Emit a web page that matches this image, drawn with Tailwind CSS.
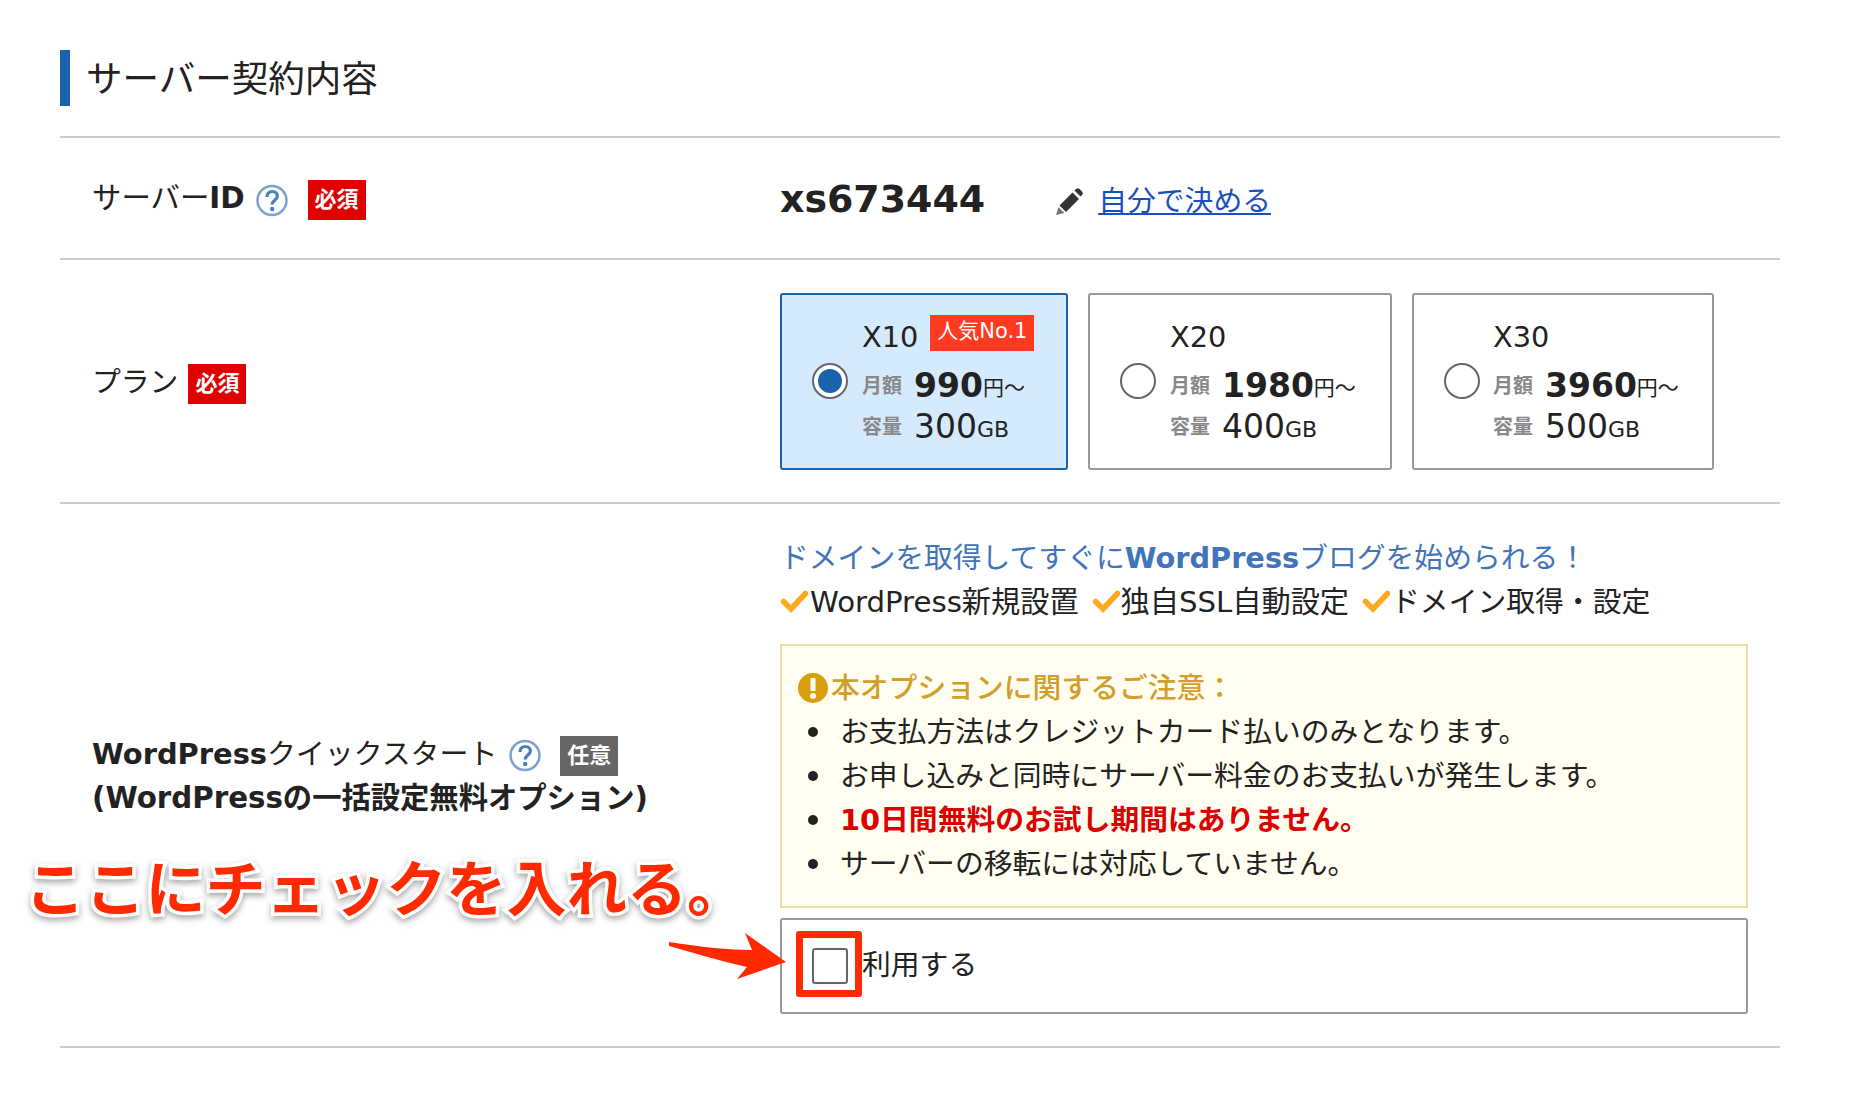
<!DOCTYPE html>
<html lang="ja">
<head>
<meta charset="utf-8">
<script src="https://cdn.jsdelivr.net/npm/@tailwindcss/browser@4"></script>
<title>サーバー契約内容</title>
</head>
<body class="bg-white text-[#222] font-['DejaVu_Sans','Noto_Sans_CJK_JP',sans-serif]">
<main class="relative w-[1854px] h-[1106px] overflow-hidden pt-[50px] pl-[60px]">
  <h2 class="h-[56px] w-[1720px] border-l-[10px] border-[#1a62ab] pl-[16px] text-[36.500px] leading-[60px] font-normal">サーバー契約内容</h2>

  <section class="mt-[30px] w-[1720px] border-t-2 border-[#ccc] grid grid-cols-[720px_1fr] h-[122px] items-center">
    <div class="pl-[32px] flex items-center text-[29.400px]">
      <span class="mt-[1px]">サーバー<b class="font-bold">ID</b></span>
      <svg class="ml-[11px] mt-[6px] w-[32px] h-[33px]" viewBox="0 0 32 33"><circle cx="16" cy="16.500" r="14.500" fill="#fff" stroke="#7ba3cc" stroke-width="2.500"/><path d="M11 13c0-3.500 2.300-5.500 5.200-5.500s5.200 1.800 5.200 4.500c0 4-5.200 4-5.200 8.500" fill="none" stroke="#4a80b8" stroke-width="3.200"/><circle cx="16.200" cy="25" r="2.200" fill="#4a80b8"/></svg>
      <span class="ml-[20px] mt-[4px] w-[58px] h-[40px] bg-[#e00000] text-white font-bold text-[22px] leading-[40px] text-center">必須</span>
    </div>
    <div class="flex items-center">
      <span class="font-bold text-[37.900px] leading-[44px] mt-[1px]">xs673444</span>
      <svg class="ml-[70px] mt-[5px] w-[28px] h-[28px]" viewBox="0 0 28 28"><path d="M3.500 20L9.500 26 1 28z" fill="#777"/><path d="M17.500 5.500L24 12 11 25 4.500 18.500z" fill="#333"/><path d="M19.500 3.500L21 2q2-1.500 3.500 0l2.500 2.500q1.500 1.500 0 3.500L25.500 9.500z" fill="#333"/></svg>
      <a class="ml-[15px] mt-[6px] text-[28.800px] leading-[36px] underline underline-offset-2 text-[#1a4fc0]">自分で決める</a>
    </div>
  </section>

  <section class="w-[1720px] border-t-2 border-[#ccc] grid grid-cols-[720px_1fr] h-[244px] items-center">
    <div class="pl-[32px] pt-[2px] flex items-center text-[28.800px]">
      <span class="mt-[1px]">プラン</span>
      <span class="ml-[10px] mt-[4px] w-[58px] h-[40px] bg-[#e00000] text-white font-bold text-[22px] leading-[40px] text-center">必須</span>
    </div>
    <div class="flex gap-[20px]">
      <div class="w-[288px] h-[177px] rounded-[3px] border-2 border-[#1a62ab] bg-[#d6eafd] flex items-center pl-[30px] gap-[14px]">
        <span class="w-[36px] h-[36px] -mt-[1px] rounded-full border-2 border-[#666] bg-white flex items-center justify-center"><span class="w-[24px] h-[24px] rounded-full bg-[#1a62ab]"></span></span>
        <div class="-mt-[1px]">
          <div class="h-[44px] flex items-center text-[28.800px]"><span>X10</span><span class="ml-[12px] w-[104px] h-[36px] -mt-[10px] bg-[#ff3a20] text-white text-[21px] leading-[32px] text-center">人気No.1</span></div>
          <div class="mt-[4px] h-[44px] flex items-center"><span class="w-[52px] text-[20px] font-bold text-[#888]">月額</span><b class="text-[33px]">990</b><span class="text-[21px] mt-[6px]">円～</span></div>
          <div class="h-[38px] flex items-center"><span class="w-[52px] text-[20px] font-bold text-[#888]">容量</span><span class="text-[33px]">300</span><span class="text-[22px] mt-[6px]">GB</span></div>
        </div>
      </div>
      <div class="w-[304px] h-[177px] rounded-[3px] border-2 border-[#999] flex items-center pl-[30px] gap-[14px]">
        <span class="w-[36px] h-[36px] -mt-[1px] rounded-full border-2 border-[#666] bg-white"></span>
        <div class="-mt-[1px]">
          <div class="h-[44px] flex items-center text-[28.800px]"><span>X20</span></div>
          <div class="mt-[4px] h-[44px] flex items-center"><span class="w-[52px] text-[20px] font-bold text-[#888]">月額</span><b class="text-[33px]">1980</b><span class="text-[21px] mt-[6px]">円～</span></div>
          <div class="h-[38px] flex items-center"><span class="w-[52px] text-[20px] font-bold text-[#888]">容量</span><span class="text-[33px]">400</span><span class="text-[22px] mt-[6px]">GB</span></div>
        </div>
      </div>
      <div class="w-[302px] h-[177px] rounded-[3px] border-2 border-[#999] flex items-center pl-[30px] gap-[13px]">
        <span class="w-[36px] h-[36px] -mt-[1px] rounded-full border-2 border-[#666] bg-white"></span>
        <div class="-mt-[1px]">
          <div class="h-[44px] flex items-center text-[28.800px]"><span>X30</span></div>
          <div class="mt-[4px] h-[44px] flex items-center"><span class="w-[52px] text-[20px] font-bold text-[#888]">月額</span><b class="text-[33px]">3960</b><span class="text-[21px] mt-[6px]">円～</span></div>
          <div class="h-[38px] flex items-center"><span class="w-[52px] text-[20px] font-bold text-[#888]">容量</span><span class="text-[33px]">500</span><span class="text-[22px] mt-[6px]">GB</span></div>
        </div>
      </div>
    </div>
  </section>

  <section class="w-[1720px] border-t-2 border-b-2 border-[#ccc] grid grid-cols-[720px_1fr] h-[546px] items-center">
    <div class="pl-[32px] pt-[2px] text-[28.900px]">
      <div class="flex items-center h-[44px]"><span class="mt-[2px]"><b>WordPress</b>クイックスタート</span>
        <svg class="ml-[12px] mt-[3px] w-[32px] h-[33px]" viewBox="0 0 32 33"><circle cx="16" cy="16.500" r="14.500" fill="#fff" stroke="#7ba3cc" stroke-width="2.500"/><path d="M11 13c0-3.500 2.300-5.500 5.200-5.500s5.200 1.800 5.200 4.500c0 4-5.200 4-5.200 8.500" fill="none" stroke="#4a80b8" stroke-width="3.200"/><circle cx="16.200" cy="25" r="2.200" fill="#4a80b8"/></svg>
        <span class="ml-[19px] mt-[3px] w-[58px] h-[40px] bg-[#666] text-white font-bold text-[22px] leading-[40px] text-center">任意</span></div>
      <div class="h-[44px] leading-[44px] font-bold text-[29.300px]">(WordPressの一括設定無料オプション)</div>
    </div>
    <div class="w-[968px] -mt-[1px]">
      <p class="text-[28.800px] leading-[44px] text-[#4174b8]">ドメインを取得してすぐに<b>WordPress</b>ブログを始められる！</p>
      <ul class="flex text-[29.200px] leading-[44px] gap-[13px]">
        <li class="flex items-center"><svg class="w-[28px] h-[28px] mr-[2px] shrink-0" viewBox="0 0 28 28"><path d="M3.500 13.500l7.500 7.500L25.500 5.500" fill="none" stroke="#ffa91e" stroke-width="5.500" stroke-linecap="round"/></svg>WordPress新規設置</li>
        <li class="flex items-center"><svg class="w-[28px] h-[28px] mr-[1px] shrink-0" viewBox="0 0 28 28"><path d="M3.500 13.500l7.500 7.500L25.500 5.500" fill="none" stroke="#ffa91e" stroke-width="5.500" stroke-linecap="round"/></svg>独自SSL自動設定</li>
        <li class="flex items-center text-[28.800px]"><svg class="w-[28px] h-[28px] mr-[1px] shrink-0" viewBox="0 0 28 28"><path d="M3.500 13.500l7.500 7.500L25.500 5.500" fill="none" stroke="#ffa91e" stroke-width="5.500" stroke-linecap="round"/></svg>ドメイン取得・設定</li>
      </ul>
      <div class="mt-[20px] h-[264px] border-2 border-[#e8e0a0] bg-[#fffef0] pl-[16px] pt-[20px]">
        <p class="flex items-center text-[28.800px] leading-[44px] font-medium text-[#d39e2c]"><svg class="w-[30px] h-[30px] mr-[3px]" viewBox="0 0 30 30"><circle cx="15" cy="15" r="15" fill="#d99e0b"/><path d="M15 5v13" stroke="#fffef0" stroke-width="5"/><circle cx="15" cy="23" r="3" fill="#fffef0"/></svg>本オプションに関するご注意：</p>
        <ul class="text-[28.800px] leading-[44px]">
          <li class="flex items-center"><span class="w-[10px] h-[10px] rounded-full bg-[#222] ml-[10px] mr-[22px]"></span>お支払方法はクレジットカード払いのみとなります。</li>
          <li class="flex items-center"><span class="w-[10px] h-[10px] rounded-full bg-[#222] ml-[10px] mr-[22px]"></span>お申し込みと同時にサーバー料金のお支払いが発生します。</li>
          <li class="flex items-center"><span class="w-[10px] h-[10px] rounded-full bg-[#222] ml-[10px] mr-[22px]"></span><b class="text-[#dd0000]">10日間無料のお試し期間はありません。</b></li>
          <li class="flex items-center"><span class="w-[10px] h-[10px] rounded-full bg-[#222] ml-[10px] mr-[22px]"></span>サーバーの移転には対応していません。</li>
        </ul>
      </div>
      <div class="mt-[10px] h-[96px] rounded-[3px] border-2 border-[#999] flex items-center pl-[30px] gap-[14px] text-[28.800px]">
        <span class="w-[36px] h-[36px] rounded-[3px] border-2 border-[#666] bg-white"></span>
        <span>利用する</span>
      </div>
    </div>
  </section>

  <div class="absolute left-[796px] top-[931px] w-[66px] h-[66px] rounded-[3px] border-[7px] border-[#ff2a00]"></div>
  <svg class="absolute left-[660px] top-[925px] w-[135px] h-[60px]" viewBox="660 925 135 60"><path d="M669 942C700 947 730 950 752 950L745 933 786 962 737 979 747 967C720 961 695 953 669 946z" fill="#ff2a00"/></svg>
  <div class="absolute left-[25px] top-[850px] text-[60.200px] leading-[80px] font-bold text-[#ff2a00] whitespace-nowrap [-webkit-text-stroke:7px_#fff] [paint-order:stroke_fill] drop-shadow-[0_3px_3px_rgba(0,0,0,0.35)]">ここにチェックを入れる。</div>
</main>
</body>
</html>
